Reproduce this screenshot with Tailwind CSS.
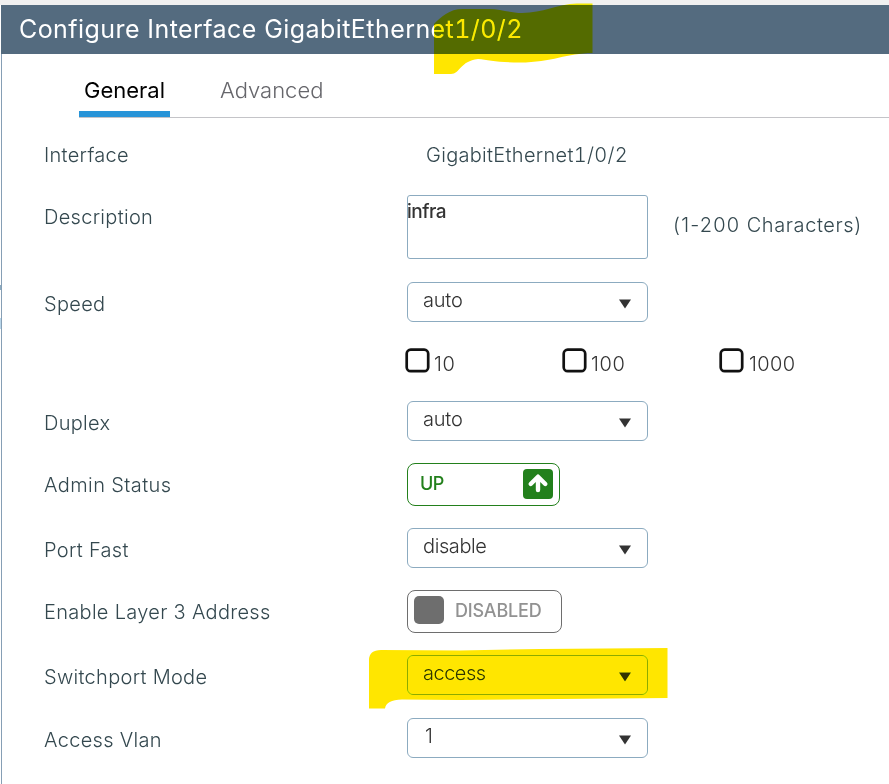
<!DOCTYPE html>
<html lang="en">
<head>
    <meta charset="UTF-8">
    <title>Configure Interface</title>
    <script src="https://cdn.jsdelivr.net/npm/@tailwindcss/browser@4"></script>
</head>

<body class="relative w-[889px] h-[784px] overflow-hidden bg-white font-['Inter','Liberation_Sans',sans-serif] font-light text-xl tracking-[0.3px] text-[#34484f]">
    <div class="h-[5px] bg-[#f0f0f0]"></div>

    <div class="ml-px">
        <header class="h-[49px] pl-[18px] flex items-center bg-[#546b7f] text-white">
            <h1 class="text-[25px] leading-none font-normal tracking-[0.43px] whitespace-nowrap">Configure Interface GigabitEthernet<span class="tabular-nums tracking-[0.4px]">1/0/2</span></h1>
        </header>

        <main class="h-[730px] border-l border-[#869fb5]">
            <nav class="h-16 ml-[77px] flex border-b border-[#c4c4c8] text-[22px] tracking-normal">
                <a class="w-[91px] h-[63px] pt-[21px] leading-[30px] text-center font-normal text-black border-b-[6px] border-[#2794d8]">General</a>
                <a class="ml-[50px] pt-[21px] leading-[30px] text-[#66666b]">Advanced</a>
            </nav>

            <form class="ml-[42px] flex flex-col">
                <div class="h-[77px] pt-[23px] flex">
                    <label class="w-[382px]">Interface</label>
                    <span>GigabitEthernet<span class="tabular-nums tracking-[0.3px]">1/0/2</span></span>
                </div>

                <div class="h-16 flex items-center">
                    <label class="w-[363px] pb-[21px]">Description</label>
                    <div class="w-[241px] h-16 pt-[3px] leading-[26px] border border-[#8cabc0] rounded-[3px] font-medium text-[#333] text-[19px] -indent-px tracking-[-0.5px]">infra</div>
                    <span class="ml-[25px] pb-[5px] tracking-[0.6px]"><span class="tracking-[1.2px]">(1-200</span> Characters)</span>
                </div>

                <div class="mt-[23px] h-10 flex items-center">
                    <label class="w-[363px] pt-[3px]">Speed</label>
                    <div class="w-[241px] h-10 pl-[15px] pr-4 pb-[5px] flex items-center justify-between border border-[#8cabc0] rounded-md text-[#333] tracking-[-0.2px]">
                        auto
                        <svg class="mt-[9px]" width="12" height="10" viewBox="0 0 12 10"><path d="M0 .5h12L6 9.5z" fill="#333"/></svg>
                    </div>
                </div>

                <div class="mt-[26px] ml-[361px] h-[26px] flex text-[#333]">
                    <label class="w-[157px] flex gap-1"><svg width="25" height="25" viewBox="0 0 25 25"><rect x="1.700" y="1.700" width="21.500" height="21.500" rx="4" fill="none" stroke="#111" stroke-width="2.700"/></svg><span class="pt-[2px] tracking-[0.7px]">10</span></label>
                    <label class="w-[157px] flex gap-1"><svg width="25" height="25" viewBox="0 0 25 25"><rect x="1.700" y="1.700" width="21.500" height="21.500" rx="4" fill="none" stroke="#111" stroke-width="2.700"/></svg><span class="pt-[2px] tracking-[0.7px]">100</span></label>
                    <label class="w-[157px] flex gap-1"><svg width="25" height="25" viewBox="0 0 25 25"><rect x="1.700" y="1.700" width="21.500" height="21.500" rx="4" fill="none" stroke="#111" stroke-width="2.700"/></svg><span class="pt-[2px] pl-px tracking-[0.4px]">1000</span></label>
                </div>

                <div class="mt-[27px] h-10 flex items-center">
                    <label class="w-[363px] pt-[3px]">Duplex</label>
                    <div class="w-[241px] h-10 pl-[15px] pr-4 pb-[5px] flex items-center justify-between border border-[#8cabc0] rounded-md text-[#333] tracking-[-0.2px]">
                        auto
                        <svg class="mt-[9px]" width="12" height="10" viewBox="0 0 12 10"><path d="M0 .5h12L6 9.5z" fill="#333"/></svg>
                    </div>
                </div>

                <div class="mt-[22px] h-[43px] flex items-center">
                    <label class="w-[363px] tracking-[0.4px]">Admin Status</label>
                    <div class="w-[153px] h-[43px] pl-3 pr-[6px] pb-px flex items-center justify-between border border-[#23801c] rounded-lg text-[#23801c] text-lg font-medium tracking-[-0.6px]">
                        <span>UP</span>
                        <svg width="30" height="30" viewBox="0 0 30 30">
                            <rect width="30" height="30" rx="4" fill="#23801c"/>
                            <path d="M15 21V9M7.700 15L15 7.700l7.300 7.300" fill="none" stroke="#fff" stroke-width="4.400" stroke-linecap="round" stroke-linejoin="round"/>
                        </svg>
                    </div>
                </div>

                <div class="mt-[22px] h-10 flex items-center">
                    <label class="w-[363px] pt-[3px]">Port Fast</label>
                    <div class="w-[241px] h-10 pl-[15px] pr-4 pb-[5px] flex items-center justify-between border border-[#8cabc0] rounded-md text-[#333] tracking-[-0.4px]">
                        disable
                        <svg class="mt-[9px]" width="12" height="10" viewBox="0 0 12 10"><path d="M0 .5h12L6 9.5z" fill="#333"/></svg>
                    </div>
                </div>

                <div class="mt-[22px] h-[43px] flex items-center">
                    <label class="w-[363px]">Enable Layer 3 Address</label>
                    <div class="w-[155px] h-[43px] pl-[6px] pb-[3px] flex items-center gap-[11px] border border-[#6e6e6e] rounded-lg text-[#929292] text-lg font-medium tracking-[-0.2px]">
                        <i class="w-[30px] h-7 rounded-[5px] bg-[#6e6e6e]"></i>
                        <span class="pt-[2px]">DISABLED</span>
                    </div>
                </div>

                <div class="mt-[22px] h-10 flex items-center">
                    <label class="w-[363px] pt-[3px]">Switchport Mode</label>
                    <div class="w-[241px] h-10 pl-[15px] pr-4 pb-[5px] flex items-center justify-between border border-[#8cabc0] rounded-md text-[#333] tracking-[-0.5px]">
                        access
                        <svg class="mt-[9px]" width="12" height="10" viewBox="0 0 12 10"><path d="M0 .5h12L6 9.5z" fill="#333"/></svg>
                    </div>
                </div>

                <div class="mt-[23px] h-10 flex items-center">
                    <label class="w-[363px] pt-[3px]">Access Vlan</label>
                    <div class="w-[241px] h-10 pl-[17px] pr-4 pb-[5px] flex items-center justify-between border border-[#8cabc0] rounded-md text-[#333]">
                        1
                        <svg class="mt-[9px]" width="12" height="10" viewBox="0 0 12 10"><path d="M0 .5h12L6 9.5z" fill="#333"/></svg>
                    </div>
                </div>
            </form>
        </main>
    </div>

    <!-- edge of the page behind the dialog -->
    <div class="absolute left-0 top-[285px] w-px h-[5px] bg-[#8cabc0]"></div>
    <div class="absolute left-0 top-[318px] w-px h-[11px] bg-[#b9d6ea]"></div>

    <!-- highlighter strokes over the title and the switchport mode -->
    <svg class="absolute inset-0 mix-blend-darken pointer-events-none" width="889" height="784" viewBox="0 0 889 784" fill="#ffe600">
        <path d="M434 24C441 17 449 9 463 9H489C501 9 510 13 522 13C543 13 557 4 577 3.500H592.500V53C567 53 552 62.500 520 62.500C498 62.500 488 60 478 59C460 61 460 74 451 74H434z"/>
        <path d="M369 660Q369 650 381 650L460 650.500L540 649L667.500 648V698L560 699L460 700L402 699.500Q386 700 385 708.500H369z"/>
    </svg>
</body>
</html>
